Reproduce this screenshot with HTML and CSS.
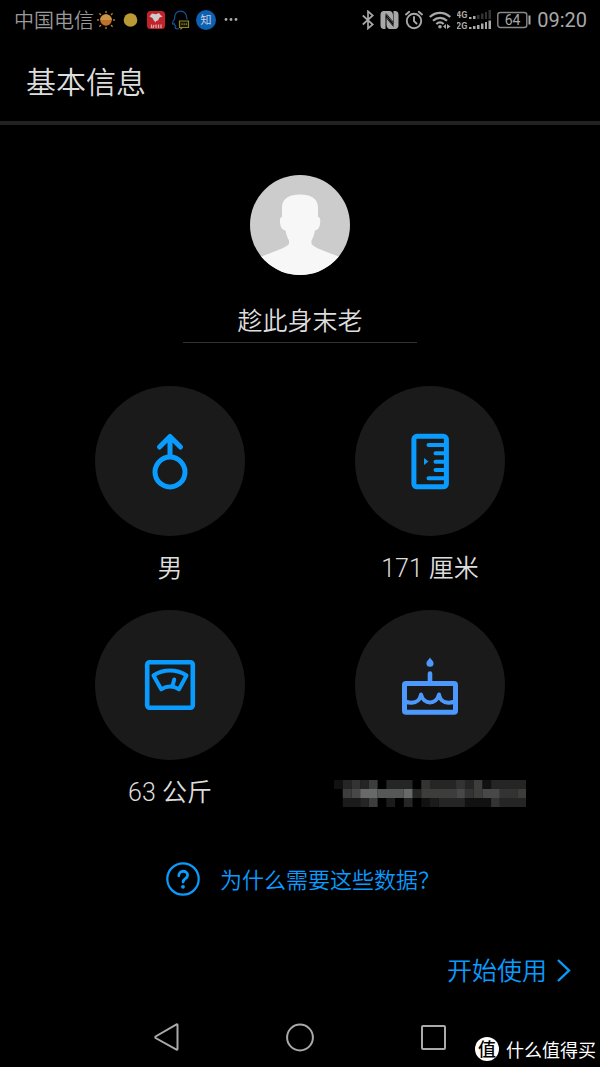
FILE: index.html
```html
<!DOCTYPE html>
<html lang="zh-CN">
<head>
<meta charset="utf-8">
<meta name="viewport" content="width=device-width, initial-scale=1">
<title>基本信息</title>
<link rel="stylesheet" href="styles.css">
</head>
<body>
<div class="status">
  <div class="status-left">
    <span class="carrier">中国电信</span>
    <div class="notices">
      <svg width="20" height="20" viewBox="0 0 20 20"><g stroke="#b8802c" stroke-width="1.4" stroke-linecap="round"><path d="M10 1.5v1M10 17.500v1M1.500 10h1M17.500 10h1M3.800 3.800l.8.8M15.400 15.400l.8.8M3.800 16.200l.8-.8M15.400 4.600l.8-.8"/></g><circle cx="10" cy="10" r="5.800" fill="#c0702a"/><path d="M4.200 10a5.800 5.800 0 0 1 11.600 0z" fill="#c99548"/></svg>
      <svg width="20" height="20" viewBox="0 0 20 20"><circle cx="9.500" cy="10" r="6.800" fill="#b99a35"/></svg>
      <svg width="20" height="20" viewBox="0 0 20 20"><rect x="1" y="1" width="18" height="18" rx="3.500" fill="#c3222b"/><path d="M3.500 6.500L6 3.500l4 .8L13 3l1.500 2 2 1.500-3 1-1.500 3-2 .5-.5 1.500-2-2.500L6.500 8z" fill="#ccc"/><path d="M5.500 14.500V18M8 15l-1 3M10 14.500V18M12.500 14.500V18M15 14.500V18" stroke="#d3aaa8" stroke-width="1.300"/></svg>
      <svg width="20" height="20" viewBox="0 0 20 20"><path d="M8 18.500c-2 .6-3.800.2-4-.8l.8-1.600c-1-.8-1.600-1.800-1.800-2.600-.8 1-1.600.8-1.500-.5.100-1.500 1-2.500 2-3.800C3.200 4.500 5.500 1.200 9.500 1.200s6.300 3 6.200 6.800l.6 1.500" fill="none" stroke="#184f91" stroke-width="1.200"/><path d="M8.500 11h9v6.500h-6l-1.500 1.200v-1.200H8.500z" fill="#171600" stroke="#8e8526" stroke-width="1.200"/><path d="M10.500 14.200h1.200M12.600 14.200h1.200M14.700 14.200h1.200" stroke="#a99e35" stroke-width="1.300"/></svg>
      <span class="zhi">知</span>
      <svg width="20" height="20" viewBox="0 0 20 20" fill="#aaa"><circle cx="5" cy="9.500" r="1.400"/><circle cx="10" cy="9.500" r="1.400"/><circle cx="15" cy="9.500" r="1.400"/></svg>
    </div>
  </div>
  <div class="status-right">
    <svg width="12" height="20" viewBox="0 0 12 20" fill="none" stroke="#a8a8a8" stroke-width="1.700"><path d="M.8 5.500l10 9L6 18.500V1.300l4.800 4.200-10 9"/></svg>
    <svg width="19" height="20" viewBox="0 0 19 20" fill="none"><path d="M3.500 1C1 1.500.5 3 .5 5v10c0 2.300.7 3.500 3 4h2V4l7.500 9V5.500C13 3 12 1.500 10 1zM15.500 19c2.500-.5 3-2 3-4V5c0-2.300-.7-3.500-3-4h-2v15L6.500 7v7.500c0 2.500 1 4 3 4.500z" fill="#a8a8a8"/><path d="M6 3.500l7.500 9M6 7.500l7.500 9" stroke="#000" stroke-width=".8"/></svg>
    <svg width="18" height="20" viewBox="0 0 18 20" fill="none" stroke="#a8a8a8" stroke-width="1.900" stroke-linecap="round"><circle cx="9" cy="11" r="7.200"/><path d="M9 7v4.200l2.500 2.300M1 4.500l3.200-2.700M17 4.500l-3.200-2.700"/></svg>
    <svg width="22" height="20" viewBox="0 0 22 20" fill="none" stroke="#a8a8a8" stroke-width="2.200"><path d="M.8 7c6-5.600 14.400-5.600 20.400 0M4 10.800c4.200-3.900 9.800-3.900 14 0M7.300 14c2.200-2 5.200-2 7.400 0"/><circle cx="11" cy="16.800" r="1.800" fill="#a8a8a8" stroke="none"/><path d="M14 16.500l3-2.500v5zM18 14l3.500 2.500L18 19z" fill="#a8a8a8" stroke="none"/></svg>
    <svg width="34" height="20" viewBox="0 0 34 20" fill="#a8a8a8"><text class="net" x="-1" y="8">4G</text><text class="net" x="-1" y="19">2G</text><path d="M12 7h2.500v2H12zM16 6h2.500v3H16zM12 17h2.500v2H12zM16 16h2.500v3H16zM20 15h2.500v4H20zM24 13.500h2.500V19H24zM28 12h2v7h-2zM31.500 10.500H34V19h-2.500z"/><path d="M20 5h2.500v4H20zM24 3.500h2.500V9H24zM28 2h2v7h-2zM31.500 0H34v9h-2.500z" fill="#333"/></svg>
    <svg width="34" height="20" viewBox="0 0 34 20"><rect x=".8" y="2.500" width="29" height="15" rx="2.500" fill="none" stroke="#888" stroke-width="1.400"/><path d="M31.500 5.500h2v9h-2z" fill="#a8a8a8"/><text class="charge" x="15.500" y="15" text-anchor="middle" fill="#a8a8a8">64</text></svg>
    <time class="clock">09:20</time>
  </div>
</div>
<header class="header"><h1>基本信息</h1></header>
<main class="main">
  <svg class="avatar" viewBox="0 0 100 100" role="img" aria-label="头像"><clipPath id="disc"><circle cx="50" cy="50" r="50"/></clipPath><g clip-path="url(#disc)"><path d="M0 0h100v100H0z" fill="#ccc"/><path d="M32 42V32c0-8 7-12.500 18-12.500S68 24 68 32v10c2.500 0 2.500 4 2 7-.5 3.500-2 6-5 6.500-.8 4.500-1.800 7-3.500 10v3.500C66 74 78 77 90 82v20H10V82c12-5 24-8 29-13v-3.500c-1.700-3-2.700-5.500-3.500-10-3-.5-4.800-3-5.300-6.500-.4-3-.7-7 1.800-7z" fill="#f7f7f7"/></g></svg>
  <input class="name" type="text" aria-label="昵称" value="趁此身末老">
  <div class="metrics">
    <button class="metric" type="button">
      <span class="disc"><svg width="60" height="60" viewBox="0 0 60 60" fill="none" stroke="#0a9bff" stroke-width="5" stroke-linecap="round" stroke-linejoin="round"><circle cx="30" cy="41" r="15"/><path d="M30 25V6M19.500 16L30 5.500 40.500 16"/></svg></span>
      <span class="value">男</span>
    </button>
    <button class="metric" type="button">
      <span class="disc"><svg width="60" height="60" viewBox="0 0 60 60" fill="none" stroke="#0a9bff" stroke-width="4.500" stroke-linecap="round" stroke-linejoin="round"><rect x="13.900" y="5.300" width="32.500" height="50.500" rx="3" stroke-width="5"/><path d="M28.500 14H46M35.500 22.200H46M35.500 30.700H46M35.500 39H46M28.500 47.300H46" stroke-width="4"/><path d="M24 27l4.500 3.500-4.500 3.500z" fill="#0a9bff" stroke="none"/></svg></span>
      <span class="value">171 厘米</span>
    </button>
    <button class="metric" type="button">
      <span class="disc"><svg width="60" height="60" viewBox="0 0 60 60" fill="none" stroke="#0a9bff" stroke-width="4" stroke-linecap="round" stroke-linejoin="round"><rect x="7.200" y="7.200" width="45.600" height="45.600" rx="2.500" stroke-width="4.600"/><path d="M13.500 20.500C23 13.800 37 13.800 46.500 20.500L39 34.300C33 30.700 27 30.700 21.200 34.300zM32.500 31L34.200 24.500"/></svg></span>
      <span class="value">63 公斤</span>
    </button>
    <button class="metric" type="button" aria-label="生日">
      <span class="disc"><svg width="60" height="60" viewBox="0 0 60 60" fill="none" stroke="#4c98fc" stroke-width="4.600" stroke-linecap="round" stroke-linejoin="round"><rect x="4.500" y="28.600" width="51" height="28.600" rx="1.500" stroke-width="5"/><path d="M30 28V18.500"/><path d="M5 46.500c7 2.500 14.500 1.500 16-7 2.500 10.500 15.500 10.500 18 0 1.500 8.500 9 9.500 16 7" stroke-width="4"/><path d="M30 2.500c1 2 3.600 3.500 3.600 5.700a3.600 3.600 0 0 1-7.200 0c0-2.200 2.600-3.700 3.600-5.700z" fill="#4c98fc" stroke="none"/></svg></span>
      <span class="value"><svg class="mosaic" viewBox="0 0 22 3" preserveAspectRatio="none">
        <path fill="#111" d="M0 0h1v1H0zM17 0h1v1h-1zM17 2h1v1h-1zM10 2h1v1h-1zM15 2h2v1h-2z"/>
        <path fill="#1b1b1b" d="M1 2h2v1H1zM6 2h1v1H6zM11 2h1v1h-1z"/>
        <path fill="#252525" d="M1 0h1v1H1zM3 0h1v1H3zM6 0h3v1H6zM11 0h5v1h-5zM18 0h4v1h-4zM9 1h1v1H9zM3 2h1v1H3zM8 2h1v1H8zM12 2h3v1h-3zM19 2h3v1h-3z"/>
        <path fill="#333" d="M2 0h1v1H2zM10 0h1v1h-1zM14 0h1v1h-1zM19 1h2v1h-2zM18 2h1v1h-1zM15 1h1v1h-1z"/>
        <path fill="#3d3d3b" d="M16 0h1v1h-1zM4 0h1v1H4zM1 1h1v1H1zM10 1h4v1h-4zM16 1h1v1h-1zM21 1h1v1h-1zM4 2h1v1H4z"/>
        <path fill="#484848" d="M2 1h1v1H2zM14 1h1v1h-1zM17 1h2v1h-2z"/>
        <path fill="#565858" d="M5 1h3v1H5z"/>
        <path fill="#686a6a" d="M3 1h2v1H3zM8 1h1v1H8z"/>
      </svg></span>
    </button>
  </div>
  <a class="help" href="#why">
    <svg width="34" height="34" viewBox="0 0 34 34" fill="none" stroke="#0a9bff" stroke-width="2.200"><circle cx="17" cy="17" r="15.700"/><path d="M12.800 13.800c0-6 8.800-6 8.800-.5 0 3.500-4.500 3.200-4.500 6.700" stroke-width="2.800" stroke-linecap="round"/><circle cx="17" cy="24.800" r="1.900" fill="#0a9bff" stroke="none"/></svg>
    <span class="text">为什么需要这些数据？</span>
  </a>
  <button class="start" type="button">
    <span class="text">开始使用</span>
    <svg width="16" height="26" viewBox="0 0 16 26" fill="none" stroke="#0a9bff" stroke-width="2.400"><path d="M2 2l11 10.500L2 23"/></svg>
  </button>
</main>
<nav class="nav" aria-label="系统导航">
  <button type="button" aria-label="返回"><svg width="32" height="32" viewBox="0 0 32 32"><path d="M26.500 4v24a.7.7 0 0 1-1 .6L4.600 17a1 1 0 0 1 0-1.500L25.500 3.400a.7.700 0 0 1 1 .6z"/></svg></button>
  <button type="button" aria-label="主屏幕"><svg width="32" height="32" viewBox="0 0 32 32"><circle cx="16" cy="16.500" r="12.900"/></svg></button>
  <button type="button" aria-label="最近任务"><svg width="32" height="32" viewBox="0 0 32 32"><rect x="5" y="5" width="23" height="23" rx="1"/></svg></button>
</nav>
<div class="brand"><span class="brand-mark">值</span><span class="text">什么值得买</span></div>
</body>
</html>
```
FILE: styles.css
```css
* { box-sizing: border-box; }
body {
  margin: 0;
  min-height: 100vh;
  position: relative;
  display: flex;
  flex-direction: column;
  background: #000;
  color: #ddd;
  font-family: Roboto, "Noto Sans CJK SC", sans-serif;
  font-size: 25px;
  font-weight: 350;
}
svg { display: block; flex: none; }
button {
  padding: 0;
  border: 0;
  background: none;
  color: inherit;
  font: inherit;
  cursor: pointer;
}
.text { padding-top: 3px; }
.status {
  height: 40px;
  padding: 0 13px 0 14px;
  display: flex;
  justify-content: space-between;
  align-items: center;
  color: #a8a8a8;
  font-size: 20px;
  line-height: 40px;
}
.status-left, .status-right, .notices { display: flex; align-items: center; }
.status-left { gap: 2px; }
.notices { gap: 5px; }
.status-right { gap: 6px; }
.carrier { padding-top: 2px; line-height: 38px; color: #999; }
.zhi {
  width: 20px;
  height: 20px;
  border-radius: 50%;
  background: #0b62b4;
  color: #ccd;
  font-size: 11px;
  font-weight: 400;
  line-height: 21px;
  text-align: center;
}
.net { font: 700 9px "Roboto", sans-serif; }
.charge { font: 400 14px "Roboto", sans-serif; }
.clock { font-weight: 400; }
.header {
  height: 85px;
  padding: 4px 26px 0;
  display: flex;
  align-items: center;
  border-bottom: 4px solid #222;
}
h1 { margin: 0; font-size: 30px; font-weight: 350; line-height: 40px; }
.main {
  flex: 1;
  padding: 50px 28px 18px;
  display: flex;
  flex-direction: column;
  align-items: center;
}
.avatar { width: 100px; height: 100px; }
.name {
  width: 234px;
  height: 43px;
  margin-top: 25px;
  padding: 0 0 4px;
  border: 0;
  border-bottom: 1px solid #333;
  outline: 0;
  background: none;
  color: inherit;
  font: inherit;
  text-align: center;
}
.metrics {
  align-self: stretch;
  margin: 43px 12px 0;
  display: grid;
  grid-template-columns: 1fr 1fr;
  row-gap: 22px;
}
.metric { display: flex; flex-direction: column; align-items: center; gap: 14px; }
.disc {
  width: 150px;
  height: 150px;
  border-radius: 50%;
  background: #1a1a1a;
  display: grid;
  place-items: center;
}
.value { height: 38px; display: flex; align-items: center; line-height: 38px; }
.mosaic { width: 192px; height: 27px; }
.help {
  margin-top: 50px;
  padding-left: 6px;
  display: flex;
  align-items: center;
  gap: 20px;
  color: #0a9bff;
  font-size: 22px;
  line-height: 30px;
  text-decoration: none;
}
.start {
  margin-top: auto;
  align-self: flex-end;
  display: flex;
  align-items: center;
  gap: 9px;
  color: #0a9bff;
  line-height: 34px;
}
.nav {
  height: 60px;
  display: flex;
  justify-content: center;
  align-items: center;
  gap: 101px;
}
.nav svg { fill: none; stroke: #aaa; stroke-width: 2; }
.brand {
  position: absolute;
  right: 4px;
  bottom: 5px;
  display: flex;
  align-items: center;
  gap: 7px;
  color: #fff;
  font-size: 18px;
  font-weight: 400;
  line-height: 23px;
}
.brand-mark {
  width: 24px;
  height: 24px;
  border-radius: 50%;
  background: #fff;
  color: #000;
  font-weight: 500;
  line-height: 25px;
  text-align: center;
}
```
